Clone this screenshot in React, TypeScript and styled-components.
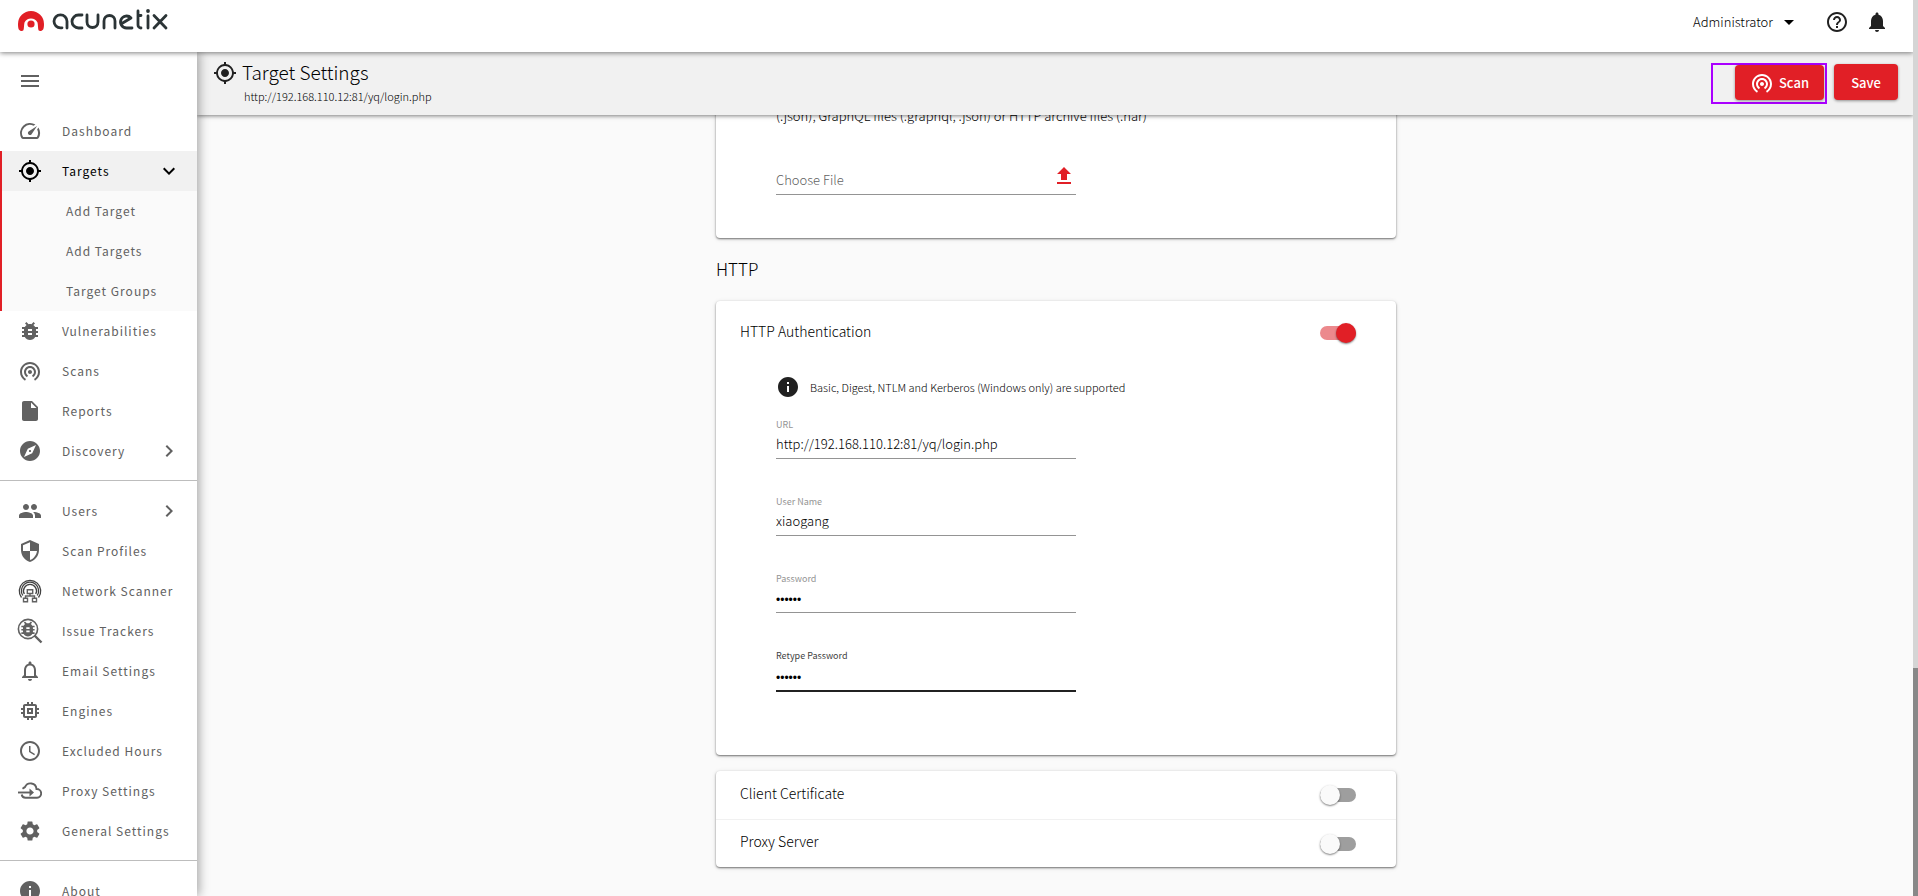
import React, { ReactNode } from 'react';
import styled, { createGlobalStyle, css } from 'styled-components';
import {
  MdMenu, MdSpeed, MdMyLocation, MdBugReport, MdWifiTethering, MdInsertDriveFile, MdExplore,
  MdPeople, MdSecurity, MdNotificationsNone, MdMemory, MdAccessTime, MdSettings, MdInfo,
  MdHelpOutline, MdNotifications, MdArrowDropDown, MdFileUpload, MdExpandMore, MdChevronRight,
} from 'react-icons/md';

const ink = '#212121';
const muted = '#616161';
const red = '#e11f26';

const GlobalStyle = createGlobalStyle`
  * { box-sizing: border-box; }
  body {
    margin: 0;
    background: #fafafa;
    color: #000;
    font-family: "Noto Sans CJK SC", "Noto Sans", sans-serif;
    font-size: 13px;
    font-weight: 300;
  }
  svg { color: ${ink}; }
  a svg, button svg { color: inherit; }
  button, input { font: inherit; color: inherit; }
  button { border: 0; background: none; padding: 0; cursor: pointer; }
  h1, h2, p { margin: 0; font-weight: 300; }
`;

const Shell = styled.div`
  display: flex;
  flex-direction: column;
  height: 100vh;
  min-height: 0;
  overflow: hidden;
`;

const TopBar = styled.header`
  display: flex;
  align-items: flex-start;
  justify-content: space-between;
  flex: none;
  height: 52px;
  padding: 8px 24px 0 18px;
  margin-right: 5px;
  background: #fff;
  box-shadow: 0 1px 5px rgba(0, 0, 0, 0.5);
  z-index: 3;
`;

const LogoLink = styled.a`
  display: block;
  line-height: 0;
`;

const Account = styled.div`
  display: flex;
  align-items: center;
  gap: 16px;
  height: 28px;
`;

const UserButton = styled.button`
  display: flex;
  align-items: center;
  gap: 4px;
  margin-right: 8px;
  font-size: 13px;
  line-height: 24px;
`;

const IconButton = styled.button`
  display: flex;
  color: ${ink};
`;

const Body = styled.div`
  display: flex;
  flex: 1;
  min-height: 0;
`;

const Sidebar = styled.nav`
  flex: none;
  width: 197px;
  background: #fff;
  box-shadow: 2px 0 10px rgba(0, 0, 0, 0.35);
  overflow: hidden;
  z-index: 2;
`;

const MenuButton = styled.button`
  display: flex;
  margin: 17px 18px 18px;
  padding: 0;
  color: ${muted};
`;

const Group = styled.div`
  padding-bottom: 9px;
  margin-bottom: 10px;
  border-bottom: 1px solid #bdbdbd;
`;

const Section = styled.div<{ $active?: boolean }>`
  ${(p) => p.$active && css`
    background: linear-gradient(${red}, ${red}) left / 2px 100% no-repeat #fafafa;
  `}
`;

const NavItem = styled.a<{ $active?: boolean; $sub?: boolean }>`
  display: flex;
  align-items: center;
  height: 40px;
  padding: 0 16px 0 ${(p) => (p.$sub ? 66 : 18)}px;
  gap: 20px;
  color: ${(p) => (p.$active ? '#000' : muted)};
  font-size: 12px;
  font-weight: 400;
  letter-spacing: 1px;
  white-space: nowrap;
  text-decoration: none;
  ${(p) => p.$active && css`
    margin-left: 2px;
    padding-left: 16px;
    background: #f1f1f1;
  `}
  svg { flex: none; }
`;

const NavLabel = styled.span`
  flex: 1;
  padding-bottom: 2px;
`;

const Main = styled.main`
  display: flex;
  flex-direction: column;
  flex: 1;
  min-width: 0;
  margin-right: 5px;
`;

const PageBar = styled.div`
  display: flex;
  justify-content: space-between;
  flex: none;
  height: 63px;
  padding: 9px 15px 0 16px;
  background: #f1f1f1;
  box-shadow: 0 1px 4px rgba(0, 0, 0, 0.5);
  z-index: 1;
`;

const TitleBlock = styled.div`
  display: flex;
  gap: 5px;
`;

const PageTitle = styled.h1`
  font-size: 19px;
  line-height: 22px;
`;

const PageUrl = styled.p`
  padding-left: 2px;
  font-size: 11px;
  line-height: 26px;
`;

const Actions = styled.div`
  display: flex;
  align-items: flex-start;
  gap: 7px;
`;

const Highlight = styled.div`
  margin-top: 2px;
  padding: 0 1px 2px 22px;
  border: 2px solid #aa00ff;
`;

const RedButton = styled.button<{ $alone?: boolean }>`
  display: flex;
  align-items: center;
  justify-content: center;
  gap: 5px;
  min-width: ${(p) => (p.$alone ? 64 : 89)}px;
  height: ${(p) => (p.$alone ? 36 : 35)}px;
  margin-top: ${(p) => (p.$alone ? 3 : 0)}px;
  border-radius: 4px;
  background: ${red};
  box-shadow: 0 1px 3px rgba(0, 0, 0, 0.4);
  color: #fff;
  font-size: 13px;
  font-weight: 500;
`;

const Scroller = styled.div`
  display: flex;
  flex: 1;
  flex-direction: column;
  align-items: center;
  min-height: 0;
  overflow: hidden;
`;

const Content = styled.div`
  width: 680px;
  max-width: 100%;
  margin: -11px 0 0 2px;
`;

const Card = styled.section<{ $gap?: boolean }>`
  margin-top: ${(p) => (p.$gap ? 16 : 0)}px;
  border-radius: 4px;
  background: #fff;
  box-shadow: 0 1px 2px rgba(0, 0, 0, 0.5), 0 1px 5px rgba(0, 0, 0, 0.12);
`;

const CardBody = styled.div<{ $top?: number; $bottom: number }>`
  padding: ${(p) => p.$top ?? 0}px 60px ${(p) => p.$bottom}px;
`;

const Note = styled.p`
  font-size: 13px;
  line-height: 24px;
`;

const InfoNote = styled(Note)`
  display: flex;
  align-items: center;
  gap: 10px;
  height: 24px;
  margin-bottom: 21px;
  font-size: 11px;
`;

const SectionTitle = styled.h2`
  padding: 18px 0 19px;
  font-size: 17px;
  line-height: 26px;
`;

const FileRow = styled.div`
  display: flex;
  justify-content: space-between;
  align-items: center;
  width: 300px;
  height: 36px;
  margin-top: 31px;
  padding-top: 5px;
  border-bottom: 1px solid #949494;
  color: #616161;
  font-size: 13px;
`;

const UploadButton = styled.button`
  display: flex;
  margin: 0 0 6px;
  color: ${red};
`;

const Field = styled.div`
  width: 300px;
  height: 77px;
`;

const FieldLabel = styled.label<{ $focused?: boolean }>`
  display: block;
  color: ${(p) => (p.$focused ? '#424242' : '#949494')};
  font-size: 9px;
  font-weight: 400;
  line-height: 10px;
`;

const FieldInput = styled.input<{ $focused?: boolean }>`
  display: block;
  width: 100%;
  height: ${(p) => (p.$focused ? 31 : 29)}px;
  padding: 0 0 1px;
  border: 0;
  border-bottom: ${(p) => (p.$focused ? `2px solid ${ink}` : '1px solid #949494')};
  outline: 0;
  background: none;
  font-size: 13px;
  &[type='password'] {
    padding: 4px 0 0;
    font-family: "Liberation Sans", sans-serif;
    font-size: 12px;
  }
`;

const ToggleRow = styled.label<{ $tall?: boolean }>`
  display: flex;
  align-items: center;
  justify-content: space-between;
  height: ${(p) => (p.$tall ? 64 : 48)}px;
  padding: 0 40px 5px 24px;
  font-size: 14px;
  & + & { border-top: 1px solid #f1f1f1; }
`;

const Switch = styled.input`
  position: relative;
  appearance: none;
  width: 36px;
  height: 14px;
  margin: 5px 0 0;
  border-radius: 7px;
  background: #9e9e9e;
  &::before {
    content: '';
    position: absolute;
    top: -3px;
    left: 0;
    width: 20px;
    height: 20px;
    border-radius: 50%;
    background: #fafafa;
    box-shadow: 0 1px 2px rgba(0, 0, 0, 0.5);
  }
  &:checked { background: #ec898d; }
  &:checked::before { left: 16px; background: ${red}; }
`;

const ScrollTrack = styled.div`
  position: fixed;
  top: 0;
  right: 0;
  bottom: 0;
  display: flex;
  align-items: flex-end;
  width: 5px;
  background: #d5d5d5;
  z-index: 4;
`;

const ScrollThumb = styled.div`
  width: 100%;
  height: 25.5%;
  background: #888;
`;

function Logo() {
  return (
    <svg width="152" height="24" viewBox="0 0 152 24" fill="none" role="img" aria-label="acunetix">
      <path d="M3.800 23C1 23 0 21 0 16A13 13 0 0 1 26 16C26 21 25 23 22.200 23C19.500 23 20.500 19.500 19.500 14.500A7.300 7.300 0 0 0 6.500 14.500C5.500 19.500 6.500 23 3.800 23Z" fill={red} />
      <circle cx="13" cy="16" r="3.600" fill={red} />
      <g stroke="#2b3436" strokeWidth="2.800" strokeLinecap="round" strokeLinejoin="round">
        <path d="M49 20V13.300A6.500 6.500 0 1 0 42.500 19.800H44" />
        <path d="M64 20H60.500A6.500 6.500 0 0 1 60.500 7H64" />
        <path d="M69 7V14A5.500 5.500 0 0 0 80 14V7" />
        <path d="M86 20V13A5.500 5.500 0 0 1 97 13V20" />
        <path d="M103 16L113 10A6 6 0 1 0 108.500 20H114" />
        <path d="M120 3V17A3 3 0 0 0 123 20M120 7.500H123M130 8V20M136 7.500L148 20M148 7.500L136 20" />
      </g>
      <circle cx="130" cy="3" r="1.900" fill="#2b3436" />
    </svg>
  );
}

function NetworkIcon() {
  return (
    <svg width="24" height="24" viewBox="0 0 24 24" fill="none" stroke="currentColor" aria-hidden="true">
      <path d="M3.500 18.500A10.700 10.700 0 1 1 20.500 18.500M4.800 16.500A8.600 8.600 0 1 1 19.200 16.500M6.300 15A6.500 6.500 0 1 1 17.700 15" stroke="#424242" strokeWidth="1.300" />
      <path d="M9.300 10.800H14.700V14.500H9.300ZM5.500 19.200H9.500V22.800H5.500ZM14.500 19.200H18.500V22.800H14.500ZM12 14.500V17M7.500 19V17H16.500V19" strokeWidth="1.400" />
    </svg>
  );
}

function TrackerIcon() {
  return (
    <svg width="24" height="24" viewBox="0 0 24 24" overflow="visible" aria-hidden="true">
      <circle cx="10" cy="10" r="9.600" fill="none" stroke="currentColor" strokeWidth="1.600" />
      <path d="M16.500 16.500L23.500 23.500" stroke="currentColor" strokeWidth="2.400" />
      <g transform="scale(.83)"><MdBugReport size={24} /></g>
    </svg>
  );
}

function ProxyIcon() {
  return (
    <svg width="24" height="24" viewBox="0 0 24 24" fill="none" stroke="currentColor" aria-hidden="true">
      <path d="M4.500 9.700C6 8.800 6.500 8.500 7 8A6 6 0 0 1 18.500 10A4.300 4.300 0 0 1 19 18.800H7.500C5.500 18.800 4 17.500 3.700 15.500" strokeWidth="1.900" />
      <path d="M0 13.500H13" strokeWidth="1.900" />
      <path d="M11.500 9.500L16 13.500L11.500 17.500Z" fill="currentColor" stroke="none" />
    </svg>
  );
}

interface ItemProps {
  icon?: ReactNode;
  label: string;
  arrow?: 'down' | 'right';
  active?: boolean;
}

function Item({ icon, label, arrow, active }: ItemProps) {
  return (
    <NavItem href="#" $active={active} $sub={!icon}>
      {icon}
      <NavLabel>{label}</NavLabel>
      {arrow === 'down' && <MdExpandMore size={24} />}
      {arrow === 'right' && <MdChevronRight size={24} />}
    </NavItem>
  );
}

interface TextFieldProps {
  id: string;
  label: string;
  value: string;
  type?: string;
  focused?: boolean;
}

function TextField({ id, label, value, type = 'text', focused }: TextFieldProps) {
  return (
    <Field>
      <FieldLabel htmlFor={id} $focused={focused}>{label}</FieldLabel>
      <FieldInput id={id} type={type} defaultValue={value} $focused={focused} />
    </Field>
  );
}

export default function App() {
  return (
    <Shell>
      <GlobalStyle />
      <TopBar>
        <LogoLink href="#"><Logo /></LogoLink>
        <Account>
          <UserButton>Administrator <MdArrowDropDown size={24} /></UserButton>
          <IconButton aria-label="Help"><MdHelpOutline size={24} /></IconButton>
          <IconButton aria-label="Notifications"><MdNotifications size={24} /></IconButton>
        </Account>
      </TopBar>
      <Body>
        <Sidebar>
          <MenuButton aria-label="Menu"><MdMenu size={24} /></MenuButton>
          <Group>
            <Item icon={<MdSpeed size={24} />} label="Dashboard" />
            <Section $active>
              <Item icon={<MdMyLocation size={24} />} label="Targets" arrow="down" active />
              <Item label="Add Target" />
              <Item label="Add Targets" />
              <Item label="Target Groups" />
            </Section>
            <Item icon={<MdBugReport size={24} />} label="Vulnerabilities" />
            <Item icon={<MdWifiTethering size={24} />} label="Scans" />
            <Item icon={<MdInsertDriveFile size={24} />} label="Reports" />
            <Item icon={<MdExplore size={24} />} label="Discovery" arrow="right" />
          </Group>
          <Group>
            <Item icon={<MdPeople size={24} />} label="Users" arrow="right" />
            <Item icon={<MdSecurity size={24} />} label="Scan Profiles" />
            <Item icon={<NetworkIcon />} label="Network Scanner" />
            <Item icon={<TrackerIcon />} label="Issue Trackers" />
            <Item icon={<MdNotificationsNone size={24} />} label="Email Settings" />
            <Item icon={<MdMemory size={24} />} label="Engines" />
            <Item icon={<MdAccessTime size={24} />} label="Excluded Hours" />
            <Item icon={<ProxyIcon />} label="Proxy Settings" />
            <Item icon={<MdSettings size={24} />} label="General Settings" />
          </Group>
          <Item icon={<MdInfo size={24} />} label="About" />
        </Sidebar>
        <Main>
          <PageBar>
            <TitleBlock>
              <MdMyLocation size={24} />
              <div>
                <PageTitle>Target Settings</PageTitle>
                <PageUrl>http://192.168.110.12:81/yq/login.php</PageUrl>
              </div>
            </TitleBlock>
            <Actions>
              <Highlight>
                <RedButton><MdWifiTethering size={24} />Scan</RedButton>
              </Highlight>
              <RedButton $alone>Save</RedButton>
            </Actions>
          </PageBar>
          <Scroller>
            <Content>
              <Card>
                <CardBody $bottom={43}>
                  <Note>(.json), GraphQL files (.graphql, .json) or HTTP archive files (.har)</Note>
                  <FileRow>
                    <span>Choose File</span>
                    <UploadButton aria-label="Upload file"><MdFileUpload size={24} /></UploadButton>
                  </FileRow>
                </CardBody>
              </Card>
              <SectionTitle>HTTP</SectionTitle>
              <Card>
                <ToggleRow $tall>HTTP Authentication<Switch type="checkbox" role="switch" defaultChecked /></ToggleRow>
                <CardBody $top={10} $bottom={27}>
                  <InfoNote><MdInfo size={24} />Basic, Digest, NTLM and Kerberos (Windows only) are supported</InfoNote>
                  <TextField id="url" label="URL" value="http://192.168.110.12:81/yq/login.php" />
                  <TextField id="user" label="User Name" value="xiaogang" />
                  <TextField id="password" label="Password" value="secret" type="password" />
                  <TextField id="retype" label="Retype Password" value="secret" type="password" focused />
                </CardBody>
              </Card>
              <Card $gap>
                <ToggleRow>Client Certificate<Switch type="checkbox" role="switch" /></ToggleRow>
                <ToggleRow>Proxy Server<Switch type="checkbox" role="switch" /></ToggleRow>
              </Card>
            </Content>
          </Scroller>
        </Main>
      </Body>
      <ScrollTrack><ScrollThumb /></ScrollTrack>
    </Shell>
  );
}
